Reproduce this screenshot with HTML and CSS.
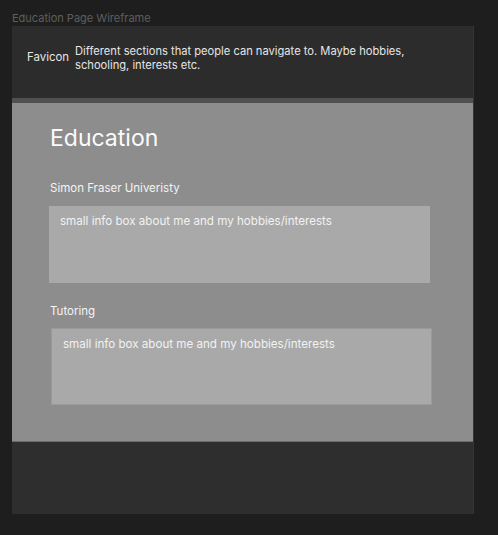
FILE: index.html
```html
<!DOCTYPE html>
<html lang="en">
<head>
    <meta charset="UTF-8">
    <meta name="viewport" content="width=device-width, initial-scale=1.0">
    <title>Education Page Wireframe</title>
    <link rel="stylesheet" href="styles.css">
</head>
<body>
    <div class="canvas">
        <div class="frame-label">Education Page Wireframe</div>
        <div class="frame">
            <div class="header">
                <span class="favicon">Favicon</span>
                <span class="nav-text">Different sections that people can navigate to. Maybe hobbies, schooling, interests etc.</span>
            </div>
            <div class="content">
                <h1 class="page-title">Education</h1>
                <div class="section">
                    <div class="section-title">Simon Fraser Univeristy</div>
                    <div class="info-box">small info box about me and my hobbies/interests</div>
                </div>
                <div class="section section-tutoring">
                    <div class="section-title">Tutoring</div>
                    <div class="info-box">small info box about me and my hobbies/interests</div>
                </div>
            </div>
            <div class="footer"></div>
        </div>
    </div>
</body>
</html>
```

FILE: styles.css
```css
html, body {
    margin: 0;
    padding: 0;
    background: #1e1e1e;
    font-family: Inter, "Liberation Sans", sans-serif;
}
.canvas {
    padding: 10px 0 0 12px;
}
.frame-label {
    height: 16px;
    font-size: 11px;
    line-height: 16px;
    color: #5e5e5e;
}
.frame {
    width: 461px;
    border-right: 1px solid #353535;
    background: #2c2c2c;
}
.header {
    height: 72px;
    box-sizing: border-box;
    padding: 18px 40px 0 15px;
    display: flex;
    align-items: flex-start;
    gap: 6px;
    color: #e6e6e6;
    line-height: 14px;
}
.favicon {
    margin-top: 6px;
    font-size: 11.45px;
    white-space: nowrap;
}
.nav-text {
    font-size: 11.15px;
}
.content {
    border-top: 5px solid #505050;
    border-bottom: 1px solid #6b6b6b;
    height: 344px;
    box-sizing: border-box;
    background: #8d8d8d;
    padding: 19px 0 0 38px;
}
.page-title {
    margin: 0;
    font-size: 23px;
    font-weight: 400;
    line-height: 32px;
    color: #fbfbfb;
}
.section {
    margin-top: 27px;
}
.section-title {
    font-size: 11.5px;
    line-height: 14px;
    color: #f4f4f4;
}
.info-box {
    margin: 11px 0 0 -1px;
    width: 381px;
    height: 77px;
    box-sizing: border-box;
    padding: 8px 11px;
    background: #a9a9a9;
    color: #f2f2f2;
    font-size: 11.6px;
    line-height: 14px;
}
.section-tutoring {
    margin-top: 21px;
}
.section-tutoring .info-box {
    margin-top: 10px;
    margin-left: 1px;
    border: 1px solid #9a9a9a;
}
.footer {
    height: 72px;
    background: #2e2e2e;
}
```
